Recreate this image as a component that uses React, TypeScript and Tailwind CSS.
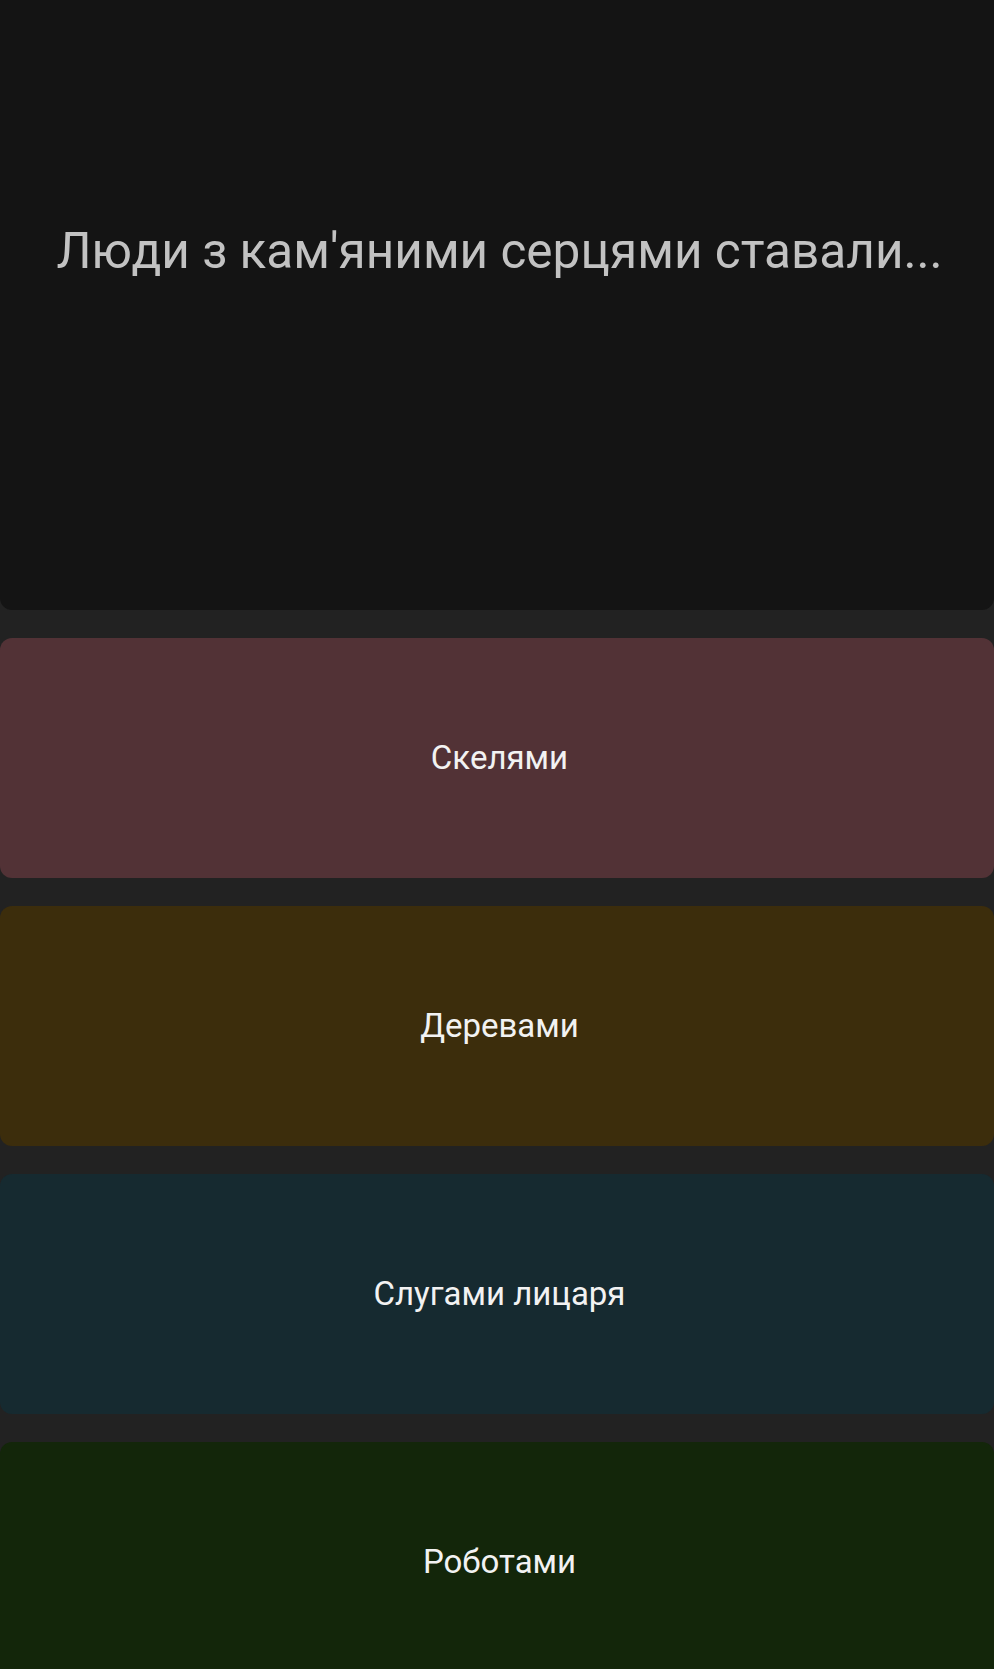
const OPTIONS = [
  { label: "Скелями", bg: "bg-[#523236]" },
  { label: "Деревами", bg: "bg-[#3c2d0c]" },
  { label: "Слугами лицаря", bg: "bg-[#162a30]" },
  { label: "Роботами", bg: "bg-[#13260a]" },
];

export default function App() {
  return (
    <div
      className="min-h-screen overflow-hidden bg-[#222222]"
      style={{ fontFamily: "Roboto, 'Noto Sans', sans-serif" }}
    >
      <div className="flex h-[610px] items-start justify-center rounded-b-xl bg-[#141414] pt-[219px] pl-[5px]">
        <div className="text-[49.5px] leading-[64px] text-[#c2c2c2]">Люди з кам'яними серцями ставали...</div>
      </div>

      <div className="mt-[28px] flex flex-col gap-[28px]">
        {OPTIONS.map((o) => (
          <button
            key={o.label}
            type="button"
            className={`flex h-[240px] w-full items-center justify-center rounded-xl pl-[5px] ${o.bg} text-[33px] text-[#f2f2f2]`}
          >
            {o.label}
          </button>
        ))}
      </div>
    </div>
  );
}
